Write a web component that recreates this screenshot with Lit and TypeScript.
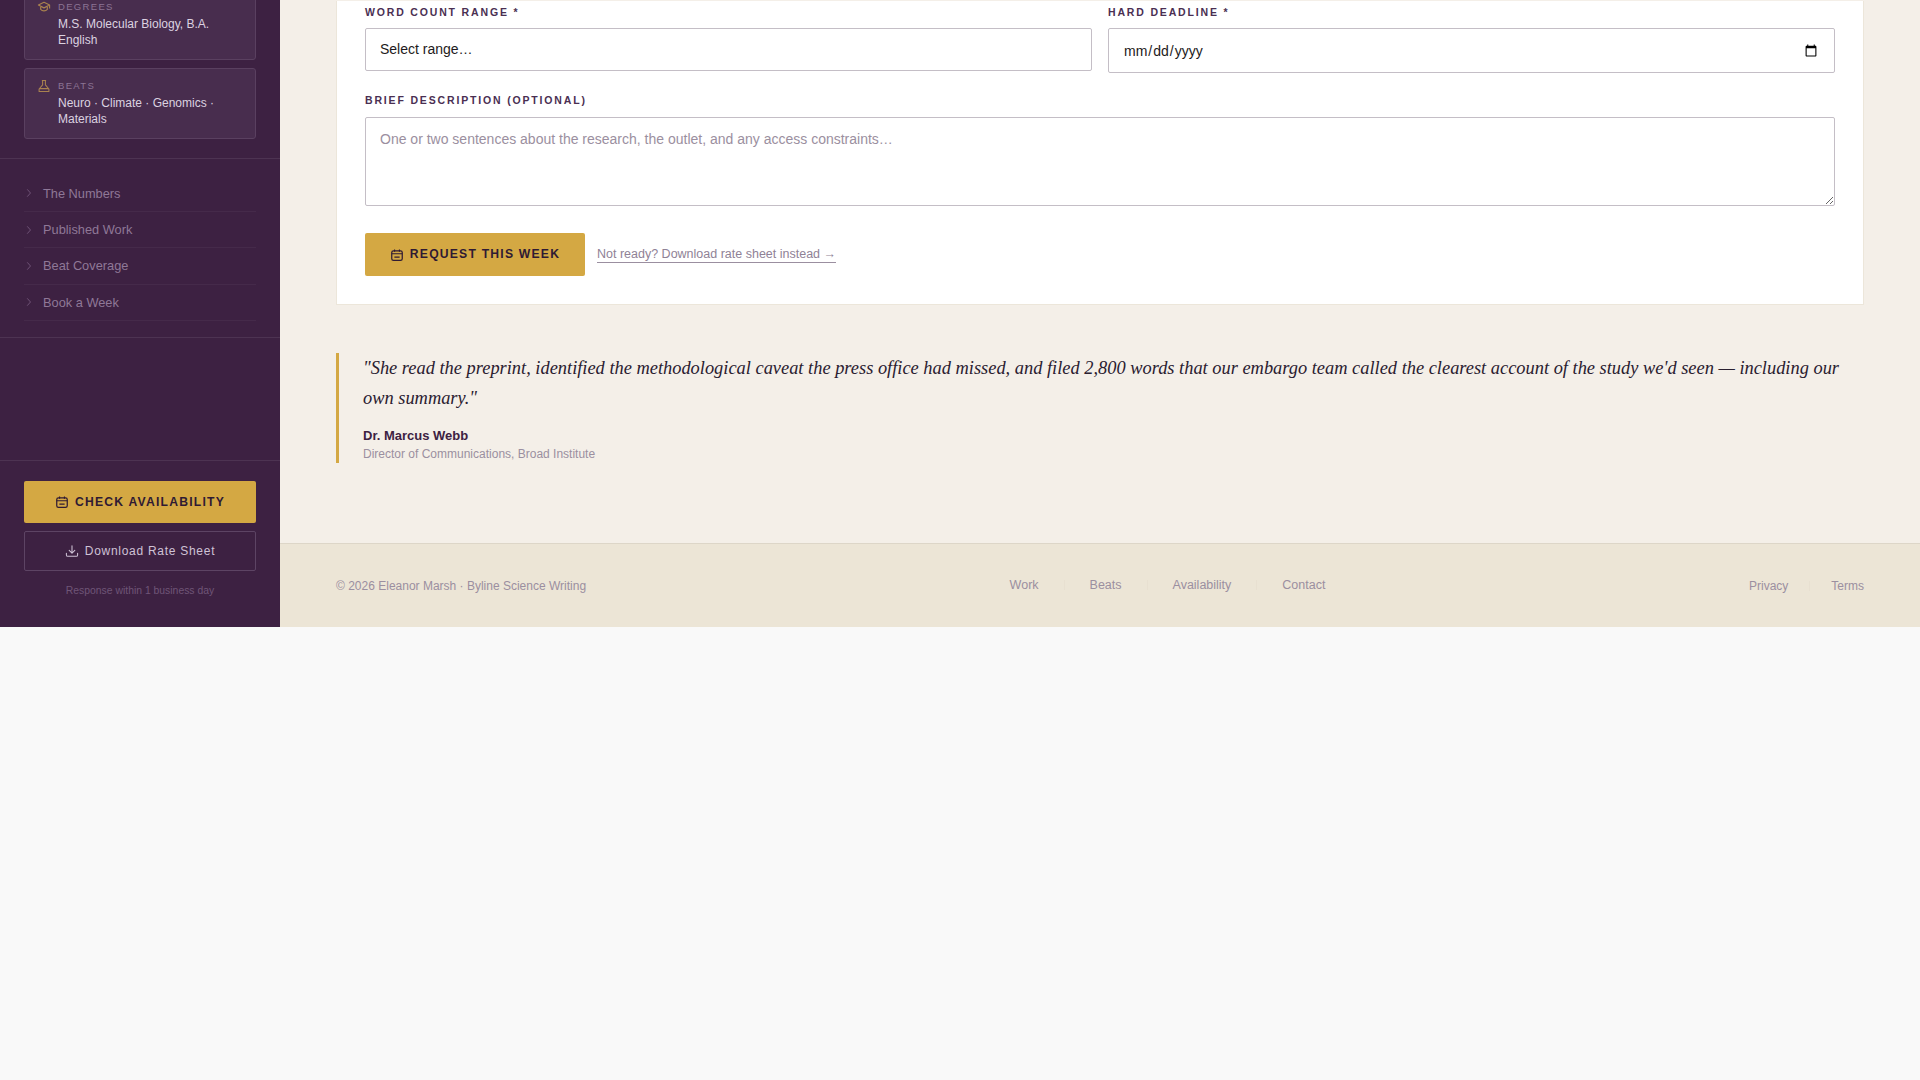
import { LitElement, html, css, svg } from "lit";
import { customElement } from "lit/decorators.js";

const calendar = svg`<rect x="2" y="3.2" width="12" height="11" rx="2" fill="none" stroke="currentColor" stroke-width="1.4"/><path d="M2 6.6h12M5.2 1.6v2.6M10.8 1.6v2.6M5 10.4h6" fill="none" stroke="currentColor" stroke-width="1.3"/>`;
const download = svg`<path d="M8 2v8M4.8 7.2 8 10.4l3.2-3.2M1.6 10.5v2a1.6 1.6 0 0 0 1.6 1.6h9.6a1.6 1.6 0 0 0 1.6-1.6v-2" fill="none" stroke="currentColor" stroke-width="1.2" stroke-linecap="round" stroke-linejoin="round"/>`;
const cap = svg`<path d="M8 2.6 1.6 5.8 8 9l6.4-3.2zM4.2 7.2v3.6C6 13 10 13 11.8 10.8V7.2M14.4 5.8v3.8" fill="none" stroke="currentColor" stroke-width="1.3" stroke-linejoin="round"/>`;
const flask = svg`<path d="M5.6 1.8h4.8M6.4 1.8v5L2.4 11.4V14.2h11.2v-2.8L9.6 6.8v-5M2.8 11h10.4" fill="none" stroke="currentColor" stroke-width="1.2" stroke-linejoin="round"/>`;
const chevron = svg`<path d="M6 3.5 10 8l-4 4.5" fill="none" stroke="currentColor" stroke-width="1.3" stroke-linecap="round" stroke-linejoin="round"/>`;

const icon = (p: unknown, cls = "ic") => html`<svg class=${cls} viewBox="0 0 16 16" aria-hidden="true">${p}</svg>`;

@customElement("app-root")
export class AppRoot extends LitElement {
  static styles = css`
    :host { display: block; font-family: "Liberation Sans", Arial, sans-serif; background: #f9f9f9; height: 1080px; }
    * { box-sizing: border-box; }
    .shell { display: flex; height: 627px; overflow: hidden; }
    .side { width: 280px; flex: none; background: #3d2142; display: flex; flex-direction: column; justify-content: flex-end; }
    .side > * { flex: none; }
    .creds { padding: 0 24px 19px; display: flex; flex-direction: column; gap: 8px; border-bottom: 1px solid #4d3352; }
    .cred { display: flex; gap: 7px; padding: 11px 12px; background: #482d4e; border: 1px solid #5a4060; border-radius: 3px; }
    .cred .ic { width: 14px; height: 14px; color: #a9824f; flex: none; margin-top: -1px; }
    .cred-l { font-size: 9.5px; letter-spacing: .14em; text-transform: uppercase; color: #8c7494; line-height: 12px; margin-bottom: 3px; }
    .cred-v { font-size: 12px; line-height: 16px; color: #dcd2e0; }
    nav.links { padding: 16px 24px; border-bottom: 1px solid #4d3352; }
    .link { height: 36.4px; display: flex; align-items: center; gap: 8px; font-size: 12.8px; color: #8f7897; border-bottom: 1px solid #452a4a; }
    .link .ic { width: 12px; height: 12px; color: #6f5276; margin-left: -1px; flex: none; }
    .spacer { height: 122px; }
    .actions { border-top: 1px solid #4d3352; padding: 20px 24px 0; height: 167px; display: flex; flex-direction: column; gap: 8px; }
    .gold { display: flex; align-items: center; justify-content: center; gap: 6px; background: #d4a843; color: #2f1a33; font-weight: 700; font-size: 12.16px; letter-spacing: .1em; text-transform: uppercase; border-radius: 2px; }
    .gold .ic { width: 14px; height: 14px; }
    .cta { height: 42px; }
    .ghost { height: 40px; display: flex; align-items: center; justify-content: center; gap: 6px; border: 1px solid #5d4464; border-radius: 2px; color: #cfc2d6; font-size: 12px; letter-spacing: .06em; }
    .ghost .ic { width: 14px; height: 14px; }
    .note { font-size: 10.4px; color: #6f5577; text-align: center; margin-top: 6px; }
    main { flex: 1; min-width: 0; background: #f4efe8; display: flex; flex-direction: column; justify-content: flex-end; }
    main > * { flex: none; }
    .body { padding: 0 56px; }
    .card { background: #fff; border: 1px solid #ece6da; border-top: 0; padding: 5px 28px 28px 28px; }
    .row { display: grid; grid-template-columns: 1fr 1fr; gap: 16px; align-items: start; }
    label { display: block; font-size: 10.5px; line-height: 12px; font-weight: 700; letter-spacing: .175em; text-transform: uppercase; color: #4a2f52; margin-bottom: 10px; }
    select, input, textarea { display: block; width: 100%; font-family: "Liberation Sans", Arial, sans-serif; font-size: 14px; background: #fff; border: 1px solid #c4bec6; border-radius: 2px; color: #1e1a20; outline: none; }
    select { appearance: none; height: 43px; padding: 0 14px 2px; }
    input { height: 45px; padding: 0 14px; }
    .gap { margin-top: 21px; }
    .gap label { margin-bottom: 11px; }
    textarea { height: 89px; padding: 13px 14px 11px; resize: vertical; }
    textarea::placeholder { color: #9b8fa0; opacity: 1; }
    .submit { display: flex; align-items: center; gap: 12px; margin-top: 27px; }
    .req { width: 220px; height: 43px; }
    .req span { margin-top: -2px; }
    .alt { font-size: 12.5px; color: #8f8296; border-bottom: 1px solid #9b8fa0; line-height: 15px; }
    blockquote { margin: 48px 0 80px; padding-left: 24px; border-left: 3px solid #d4a843; height: 110px; }
    blockquote p { margin: 0; font-family: "Liberation Serif", "Times New Roman", serif; font-style: italic; font-size: 18.4px; line-height: 30px; color: #2a2030; }
    .who { margin-top: 15px; font-size: 13px; line-height: 16px; font-weight: 700; color: #3d2142; }
    .role { margin-top: 3px; font-size: 12px; line-height: 15px; color: #9b8fa0; }
    footer { height: 84px; background: #ece5d6; border-top: 1px solid #ddd6c8; padding: 0 56px; display: flex; align-items: center; justify-content: space-between; font-size: 12px; color: #9b8fa0; }
    .fnav { display: flex; align-items: center; margin-top: -2px; font-size: 12.5px; }
    .fnav.end { margin-top: 0; font-size: 12px; }
    .sep { width: 1px; height: 10px; background: #e8e0d1; margin: 0 25px; }
    .end .sep { margin: 0 21px; }
  `;

  render() {
    return html`<div class="shell">
      <aside class="side">
        <div class="creds">
          <div class="cred">${icon(cap)}<div><div class="cred-l">Degrees</div><div class="cred-v">M.S. Molecular Biology, B.A. English</div></div></div>
          <div class="cred">${icon(flask)}<div><div class="cred-l">Beats</div><div class="cred-v">Neuro · Climate · Genomics · Materials</div></div></div>
        </div>
        <nav class="links">
          ${["The Numbers", "Published Work", "Beat Coverage", "Book a Week"].map((t) => html`<div class="link">${icon(chevron)}<span>${t}</span></div>`)}
        </nav>
        <div class="spacer"></div>
        <div class="actions">
          <div class="gold cta">${icon(calendar)}<span>Check Availability</span></div>
          <div class="ghost">${icon(download)}<span>Download Rate Sheet</span></div>
          <div class="note">Response within 1 business day</div>
        </div>
      </aside>
      <main>
        <div class="body">
          <div class="card">
            <div class="row">
              <div><label>Word Count Range *</label><select><option>Select range…</option></select></div>
              <div><label>Hard Deadline *</label><input type="date" /></div>
            </div>
            <div class="gap"><label>Brief Description (optional)</label><textarea placeholder="One or two sentences about the research, the outlet, and any access constraints…"></textarea></div>
            <div class="submit">
              <div class="gold req">${icon(calendar)}<span>Request This Week</span></div>
              <span class="alt">Not ready? Download rate sheet instead →</span>
            </div>
          </div>
          <blockquote>
            <p>"She read the preprint, identified the methodological caveat the press office had missed, and filed 2,800 words that our embargo team called the clearest account of the study we'd seen — including our own summary."</p>
            <div class="who">Dr. Marcus Webb</div>
            <div class="role">Director of Communications, Broad Institute</div>
          </blockquote>
        </div>
        <footer>
          <span>© 2026 Eleanor Marsh · Byline Science Writing</span>
          <div class="fnav"><span>Work</span><i class="sep"></i><span>Beats</span><i class="sep"></i><span>Availability</span><i class="sep"></i><span>Contact</span></div>
          <div class="fnav end"><span>Privacy</span><i class="sep"></i><span>Terms</span></div>
        </footer>
      </main>
    </div>`;
  }
}
